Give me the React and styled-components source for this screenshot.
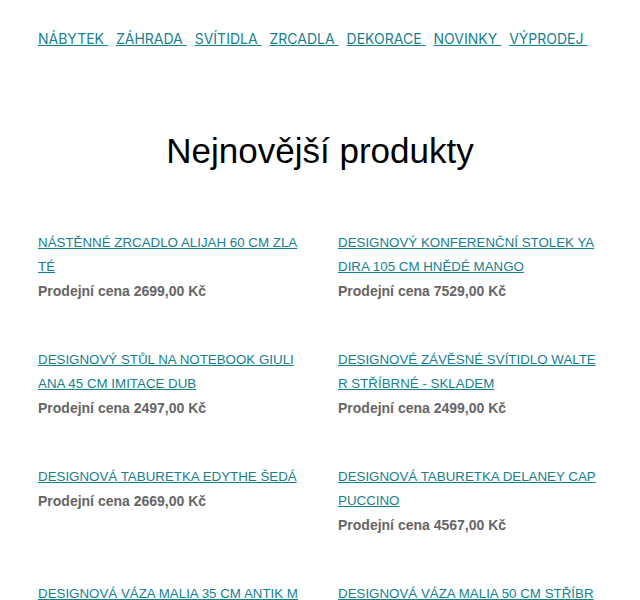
import React from 'react'
import styled, { createGlobalStyle } from 'styled-components'

const GlobalStyle = createGlobalStyle`
  html, body {
    margin: 0;
    padding: 0;
    background: #ffffff;
  }
  body {
    font-family: "Liberation Sans", Arial, sans-serif;
  }
`

const Page = styled.div`
  width: 564px;
  margin: 0 auto;
  padding-top: 29px;
`

const Nav = styled.nav`
  display: flex;
  flex-wrap: wrap;
  gap: 8px;
  font-family: Inter, "Noto Sans", sans-serif;
  font-size: 14px;
  line-height: 20px;
`

const NavLink = styled.a`
  color: #17808f;
  text-decoration: underline;
  white-space: pre;
`

const Title = styled.h1`
  margin: 80px 0 0;
  text-align: center;
  font-weight: 400;
  font-size: 35px;
  line-height: 44px;
  color: #000;
`

const Grid = styled.div`
  display: grid;
  grid-template-columns: 264px 264px;
  column-gap: 36px;
  margin-top: 58px;
`

const Item = styled.div`
  margin-bottom: 45px;
`

const ItemLink = styled.a`
  display: block;
  color: #17808f;
  font-size: 13.33px;
  line-height: 24px;
  text-decoration: underline;
  word-break: break-all;
`

const Price = styled.div`
  color: #666;
  font-size: 14px;
  font-weight: 700;
  line-height: 24px;
`

const menu = ['NÁBYTEK', 'ZÁHRADA', 'SVÍTIDLA', 'ZRCADLA', 'DEKORACE', 'NOVINKY', 'VÝPRODEJ']

const products = [
  { name: 'NÁSTĚNNÉ ZRCADLO ALIJAH 60 CM ZLATÉ', price: '2699,00' },
  { name: 'DESIGNOVÝ KONFERENČNÍ STOLEK YADIRA 105 CM HNĚDÉ MANGO', price: '7529,00' },
  { name: 'DESIGNOVÝ STŮL NA NOTEBOOK GIULIANA 45 CM IMITACE DUB', price: '2497,00' },
  { name: 'DESIGNOVÉ ZÁVĚSNÉ SVÍTIDLO WALTER STŘÍBRNÉ - SKLADEM', price: '2499,00' },
  { name: 'DESIGNOVÁ TABURETKA EDYTHE ŠEDÁ', price: '2669,00' },
  { name: 'DESIGNOVÁ TABURETKA DELANEY CAPPUCCINO', price: '4567,00' },
  { name: 'DESIGNOVÁ VÁZA MALIA 35 CM ANTIK MOSAZ', price: '1299,00' },
  { name: 'DESIGNOVÁ VÁZA MALIA 50 CM STŘÍBRNÁ', price: '1899,00' },
]

const App = () => {
  return (
    <>
      <GlobalStyle />
      <Page>
        <Nav>
          {menu.map((m) => (
            <NavLink href="#" key={m}>{m + ' '}</NavLink>
          ))}
        </Nav>
        <Title>Nejnovější produkty</Title>
        <Grid>
          {products.map((p) => (
            <Item key={p.name}>
              <ItemLink href="#">{p.name}</ItemLink>
              <Price>Prodejní cena {p.price} Kč</Price>
            </Item>
          ))}
        </Grid>
      </Page>
    </>
  )
}

export default App
